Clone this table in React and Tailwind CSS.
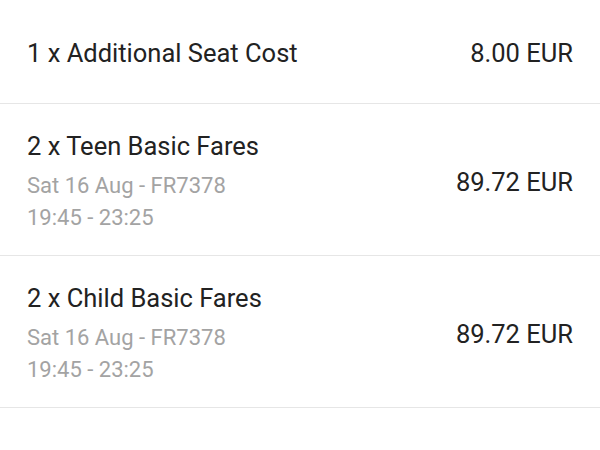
import React from 'react';

const fares = [
  { title: '2 x Teen Basic Fares', date: 'Sat 16 Aug - FR7378', time: '19:45 - 23:25', price: '89.72 EUR' },
  { title: '2 x Child Basic Fares', date: 'Sat 16 Aug - FR7378', time: '19:45 - 23:25', price: '89.72 EUR' },
];

function FareRow({ fare }) {
  return (
    <div className="flex items-center justify-between h-[152px] px-[27px] pt-[26px] pb-[21px] border-b-[1.5px] border-[#e6e6e6]">
      <div className="flex flex-col self-start">
        <div className="text-[25.5px] leading-[32px] text-[#222]">{fare.title}</div>
        <div className="mt-[8px] text-[22px] leading-[32px] text-[#a3a3a3]">{fare.date}</div>
        <div className="text-[22px] leading-[32px] text-[#a3a3a3]">{fare.time}</div>
      </div>
      <div className="text-[25.5px] leading-[32px] text-[#222] -mt-[1px]">{fare.price}</div>
    </div>
  );
}

export default function App() {
  return (
    <div className="w-[600px] h-[450px] overflow-hidden bg-white" style={{ fontFamily: 'Roboto, sans-serif' }}>
      <div className="flex items-center justify-between h-[104px] px-[27px] pt-[2px] border-b-[1.5px] border-[#e6e6e6]">
        <div className="text-[25.5px] leading-[32px] text-[#222]">1 x Additional Seat Cost</div>
        <div className="text-[25.5px] leading-[32px] text-[#222]">8.00 EUR</div>
      </div>
      {fares.map((f, i) => (
        <FareRow key={i} fare={f} />
      ))}
    </div>
  );
}
